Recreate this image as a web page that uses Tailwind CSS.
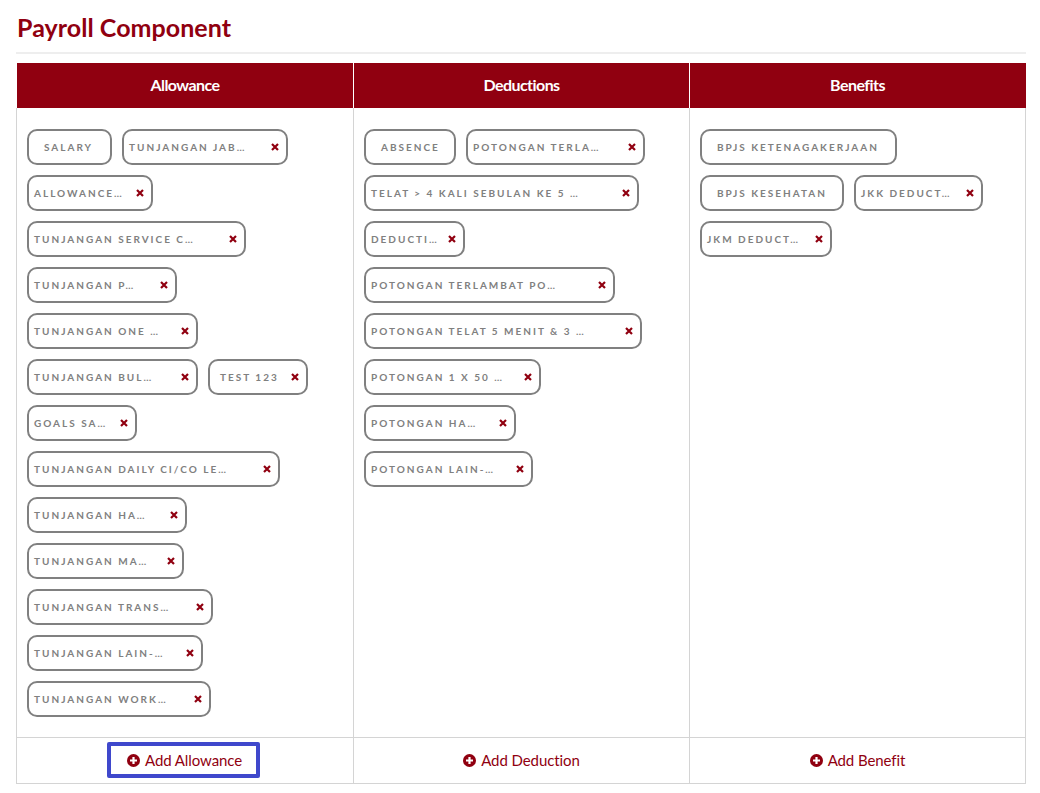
<!DOCTYPE html>
<html>
<head>
<meta charset="utf-8">
<script src="https://cdn.jsdelivr.net/npm/@tailwindcss/browser@4"></script>
</head>
<body class="bg-white font-['Lato','Liberation_Sans',sans-serif]">
<div class="w-[1040px] h-[793px] overflow-hidden pl-4 pr-[14px] pt-[10px]">
  <h1 class="text-[25px] leading-[34px] font-bold text-[#900010] pl-px tracking-[0.05px]">Payroll Component</h1>
  <div class="h-[2px] bg-[#eeeeee] mt-[8px] mb-[9px]"></div>
  <div class="grid grid-cols-[337px_336px_337px] w-[1010px]">
    <div class="h-[45px] pb-[2px] bg-[#900010] text-white font-bold text-[16px] flex items-center justify-center tracking-[-0.55px] border-l border-white">Allowance</div>
    <div class="h-[45px] pb-[2px] bg-[#900010] text-white font-bold text-[16px] flex items-center justify-center tracking-[-0.55px] border-l border-white">Deductions</div>
    <div class="h-[45px] pb-[2px] pr-[1px] bg-[#900010] text-white font-bold text-[16px] flex items-center justify-center tracking-[-0.55px] border-l border-white">Benefits</div>

    <div class="h-[629px] border-l border-[#d4d4d4] pl-[10px] pt-[21px] flex flex-col gap-[10px]">
      <div class="flex gap-[10px]">
        <div class="w-[85px] h-[36px] border-2 border-[#808080] rounded-[10px] flex items-center pl-[15px] text-[10px] font-bold tracking-[2px] text-[#808080] whitespace-nowrap">SALARY</div>
        <div class="w-[166px] h-[36px] border-2 border-[#808080] rounded-[10px] flex items-center justify-between pl-[5px] pr-[7px] text-[10px] font-bold tracking-[2px] text-[#808080] whitespace-nowrap"><span>TUNJANGAN JAB…</span><svg class="w-[8px] h-[8px]" viewBox="0 0 8 8"><path d="M1 1L7 7M7 1L1 7" stroke="#900010" stroke-width="2.2"/></svg></div>
      </div>
      <div class="flex gap-[10px]">
        <div class="w-[126px] h-[36px] border-2 border-[#808080] rounded-[10px] flex items-center justify-between pl-[5px] pr-[7px] text-[10px] font-bold tracking-[2px] text-[#808080] whitespace-nowrap"><span>ALLOWANCE…</span><svg class="w-[8px] h-[8px]" viewBox="0 0 8 8"><path d="M1 1L7 7M7 1L1 7" stroke="#900010" stroke-width="2.2"/></svg></div>
      </div>
      <div class="flex gap-[10px]">
        <div class="w-[219px] h-[36px] border-2 border-[#808080] rounded-[10px] flex items-center justify-between pl-[5px] pr-[7px] text-[10px] font-bold tracking-[2px] text-[#808080] whitespace-nowrap"><span>TUNJANGAN SERVICE C…</span><svg class="w-[8px] h-[8px]" viewBox="0 0 8 8"><path d="M1 1L7 7M7 1L1 7" stroke="#900010" stroke-width="2.2"/></svg></div>
      </div>
      <div class="flex gap-[10px]">
        <div class="w-[150px] h-[36px] border-2 border-[#808080] rounded-[10px] flex items-center justify-between pl-[5px] pr-[7px] text-[10px] font-bold tracking-[2px] text-[#808080] whitespace-nowrap"><span>TUNJANGAN P…</span><svg class="w-[8px] h-[8px]" viewBox="0 0 8 8"><path d="M1 1L7 7M7 1L1 7" stroke="#900010" stroke-width="2.2"/></svg></div>
      </div>
      <div class="flex gap-[10px]">
        <div class="w-[171px] h-[36px] border-2 border-[#808080] rounded-[10px] flex items-center justify-between pl-[5px] pr-[7px] text-[10px] font-bold tracking-[2px] text-[#808080] whitespace-nowrap"><span>TUNJANGAN ONE …</span><svg class="w-[8px] h-[8px]" viewBox="0 0 8 8"><path d="M1 1L7 7M7 1L1 7" stroke="#900010" stroke-width="2.2"/></svg></div>
      </div>
      <div class="flex gap-[10px]">
        <div class="w-[171px] h-[36px] border-2 border-[#808080] rounded-[10px] flex items-center justify-between pl-[5px] pr-[7px] text-[10px] font-bold tracking-[2px] text-[#808080] whitespace-nowrap"><span>TUNJANGAN BUL…</span><svg class="w-[8px] h-[8px]" viewBox="0 0 8 8"><path d="M1 1L7 7M7 1L1 7" stroke="#900010" stroke-width="2.2"/></svg></div>
        <div class="w-[100px] h-[36px] border-2 border-[#808080] rounded-[10px] flex items-center justify-between pl-[10px] pr-[7px] text-[10px] font-bold tracking-[2px] text-[#808080] whitespace-nowrap"><span>TEST 123</span><svg class="w-[8px] h-[8px]" viewBox="0 0 8 8"><path d="M1 1L7 7M7 1L1 7" stroke="#900010" stroke-width="2.2"/></svg></div>
      </div>
      <div class="flex gap-[10px]">
        <div class="w-[110px] h-[36px] border-2 border-[#808080] rounded-[10px] flex items-center justify-between pl-[5px] pr-[7px] text-[10px] font-bold tracking-[2px] text-[#808080] whitespace-nowrap"><span>GOALS SA…</span><svg class="w-[8px] h-[8px]" viewBox="0 0 8 8"><path d="M1 1L7 7M7 1L1 7" stroke="#900010" stroke-width="2.2"/></svg></div>
      </div>
      <div class="flex gap-[10px]">
        <div class="w-[253px] h-[36px] border-2 border-[#808080] rounded-[10px] flex items-center justify-between pl-[5px] pr-[7px] text-[10px] font-bold tracking-[2px] text-[#808080] whitespace-nowrap"><span>TUNJANGAN DAILY CI/CO LE…</span><svg class="w-[8px] h-[8px]" viewBox="0 0 8 8"><path d="M1 1L7 7M7 1L1 7" stroke="#900010" stroke-width="2.2"/></svg></div>
      </div>
      <div class="flex gap-[10px]">
        <div class="w-[160px] h-[36px] border-2 border-[#808080] rounded-[10px] flex items-center justify-between pl-[5px] pr-[7px] text-[10px] font-bold tracking-[2px] text-[#808080] whitespace-nowrap"><span>TUNJANGAN HA…</span><svg class="w-[8px] h-[8px]" viewBox="0 0 8 8"><path d="M1 1L7 7M7 1L1 7" stroke="#900010" stroke-width="2.2"/></svg></div>
      </div>
      <div class="flex gap-[10px]">
        <div class="w-[157px] h-[36px] border-2 border-[#808080] rounded-[10px] flex items-center justify-between pl-[5px] pr-[7px] text-[10px] font-bold tracking-[2px] text-[#808080] whitespace-nowrap"><span>TUNJANGAN MA…</span><svg class="w-[8px] h-[8px]" viewBox="0 0 8 8"><path d="M1 1L7 7M7 1L1 7" stroke="#900010" stroke-width="2.2"/></svg></div>
      </div>
      <div class="flex gap-[10px]">
        <div class="w-[186px] h-[36px] border-2 border-[#808080] rounded-[10px] flex items-center justify-between pl-[5px] pr-[7px] text-[10px] font-bold tracking-[2px] text-[#808080] whitespace-nowrap"><span>TUNJANGAN TRANS…</span><svg class="w-[8px] h-[8px]" viewBox="0 0 8 8"><path d="M1 1L7 7M7 1L1 7" stroke="#900010" stroke-width="2.2"/></svg></div>
      </div>
      <div class="flex gap-[10px]">
        <div class="w-[176px] h-[36px] border-2 border-[#808080] rounded-[10px] flex items-center justify-between pl-[5px] pr-[7px] text-[10px] font-bold tracking-[2px] text-[#808080] whitespace-nowrap"><span>TUNJANGAN LAIN-…</span><svg class="w-[8px] h-[8px]" viewBox="0 0 8 8"><path d="M1 1L7 7M7 1L1 7" stroke="#900010" stroke-width="2.2"/></svg></div>
      </div>
      <div class="flex gap-[10px]">
        <div class="w-[184px] h-[36px] border-2 border-[#808080] rounded-[10px] flex items-center justify-between pl-[5px] pr-[7px] text-[10px] font-bold tracking-[2px] text-[#808080] whitespace-nowrap"><span>TUNJANGAN WORK…</span><svg class="w-[8px] h-[8px]" viewBox="0 0 8 8"><path d="M1 1L7 7M7 1L1 7" stroke="#900010" stroke-width="2.2"/></svg></div>
      </div>
    </div>

    <div class="h-[629px] border-l border-[#d4d4d4] pl-[10px] pt-[21px] flex flex-col gap-[10px]">
      <div class="flex gap-[10px]">
        <div class="w-[92px] h-[36px] border-2 border-[#808080] rounded-[10px] flex items-center pl-[15px] text-[10px] font-bold tracking-[2px] text-[#808080] whitespace-nowrap">ABSENCE</div>
        <div class="w-[179px] h-[36px] border-2 border-[#808080] rounded-[10px] flex items-center justify-between pl-[5px] pr-[7px] text-[10px] font-bold tracking-[2px] text-[#808080] whitespace-nowrap"><span>POTONGAN TERLA…</span><svg class="w-[8px] h-[8px]" viewBox="0 0 8 8"><path d="M1 1L7 7M7 1L1 7" stroke="#900010" stroke-width="2.2"/></svg></div>
      </div>
      <div class="flex gap-[10px]">
        <div class="w-[275px] h-[36px] border-2 border-[#808080] rounded-[10px] flex items-center justify-between pl-[5px] pr-[7px] text-[10px] font-bold tracking-[2px] text-[#808080] whitespace-nowrap"><span>TELAT &gt; 4 KALI SEBULAN KE 5 …</span><svg class="w-[8px] h-[8px]" viewBox="0 0 8 8"><path d="M1 1L7 7M7 1L1 7" stroke="#900010" stroke-width="2.2"/></svg></div>
      </div>
      <div class="flex gap-[10px]">
        <div class="w-[101px] h-[36px] border-2 border-[#808080] rounded-[10px] flex items-center justify-between pl-[5px] pr-[7px] text-[10px] font-bold tracking-[2px] text-[#808080] whitespace-nowrap"><span>DEDUCTI…</span><svg class="w-[8px] h-[8px]" viewBox="0 0 8 8"><path d="M1 1L7 7M7 1L1 7" stroke="#900010" stroke-width="2.2"/></svg></div>
      </div>
      <div class="flex gap-[10px]">
        <div class="w-[251px] h-[36px] border-2 border-[#808080] rounded-[10px] flex items-center justify-between pl-[5px] pr-[7px] text-[10px] font-bold tracking-[2px] text-[#808080] whitespace-nowrap"><span>POTONGAN TERLAMBAT PO…</span><svg class="w-[8px] h-[8px]" viewBox="0 0 8 8"><path d="M1 1L7 7M7 1L1 7" stroke="#900010" stroke-width="2.2"/></svg></div>
      </div>
      <div class="flex gap-[10px]">
        <div class="w-[278px] h-[36px] border-2 border-[#808080] rounded-[10px] flex items-center justify-between pl-[5px] pr-[7px] text-[10px] font-bold tracking-[2px] text-[#808080] whitespace-nowrap"><span>POTONGAN TELAT 5 MENIT &amp; 3 …</span><svg class="w-[8px] h-[8px]" viewBox="0 0 8 8"><path d="M1 1L7 7M7 1L1 7" stroke="#900010" stroke-width="2.2"/></svg></div>
      </div>
      <div class="flex gap-[10px]">
        <div class="w-[177px] h-[36px] border-2 border-[#808080] rounded-[10px] flex items-center justify-between pl-[5px] pr-[7px] text-[10px] font-bold tracking-[2px] text-[#808080] whitespace-nowrap"><span>POTONGAN 1 X 50 …</span><svg class="w-[8px] h-[8px]" viewBox="0 0 8 8"><path d="M1 1L7 7M7 1L1 7" stroke="#900010" stroke-width="2.2"/></svg></div>
      </div>
      <div class="flex gap-[10px]">
        <div class="w-[152px] h-[36px] border-2 border-[#808080] rounded-[10px] flex items-center justify-between pl-[5px] pr-[7px] text-[10px] font-bold tracking-[2px] text-[#808080] whitespace-nowrap"><span>POTONGAN HA…</span><svg class="w-[8px] h-[8px]" viewBox="0 0 8 8"><path d="M1 1L7 7M7 1L1 7" stroke="#900010" stroke-width="2.2"/></svg></div>
      </div>
      <div class="flex gap-[10px]">
        <div class="w-[169px] h-[36px] border-2 border-[#808080] rounded-[10px] flex items-center justify-between pl-[5px] pr-[7px] text-[10px] font-bold tracking-[2px] text-[#808080] whitespace-nowrap"><span>POTONGAN LAIN-…</span><svg class="w-[8px] h-[8px]" viewBox="0 0 8 8"><path d="M1 1L7 7M7 1L1 7" stroke="#900010" stroke-width="2.2"/></svg></div>
      </div>
    </div>

    <div class="h-[629px] border-l border-r border-[#d4d4d4] pl-[10px] pt-[21px] flex flex-col gap-[10px]">
      <div class="flex gap-[10px]">
        <div class="w-[197px] h-[36px] border-2 border-[#808080] rounded-[10px] flex items-center pl-[15px] text-[10px] font-bold tracking-[2px] text-[#808080] whitespace-nowrap">BPJS KETENAGAKERJAAN</div>
      </div>
      <div class="flex gap-[10px]">
        <div class="w-[144px] h-[36px] border-2 border-[#808080] rounded-[10px] flex items-center pl-[15px] text-[10px] font-bold tracking-[2px] text-[#808080] whitespace-nowrap">BPJS KESEHATAN</div>
        <div class="w-[129px] h-[36px] border-2 border-[#808080] rounded-[10px] flex items-center justify-between pl-[5px] pr-[7px] text-[10px] font-bold tracking-[2px] text-[#808080] whitespace-nowrap"><span>JKK DEDUCT…</span><svg class="w-[8px] h-[8px]" viewBox="0 0 8 8"><path d="M1 1L7 7M7 1L1 7" stroke="#900010" stroke-width="2.2"/></svg></div>
      </div>
      <div class="flex gap-[10px]">
        <div class="w-[132px] h-[36px] border-2 border-[#808080] rounded-[10px] flex items-center justify-between pl-[5px] pr-[7px] text-[10px] font-bold tracking-[2px] text-[#808080] whitespace-nowrap"><span>JKM DEDUCT…</span><svg class="w-[8px] h-[8px]" viewBox="0 0 8 8"><path d="M1 1L7 7M7 1L1 7" stroke="#900010" stroke-width="2.2"/></svg></div>
      </div>
    </div>

    <div class="h-[47px] border-l border-t border-b border-[#d4d4d4] flex items-center justify-center">
      <div class="w-[153px] h-[36px] mr-[3px] mb-[2px] pt-[2px] border-[4px] border-[#3f48cc] rounded-[2px] flex items-center pl-[16px] gap-[5px] text-[15px] tracking-[-0.08px] text-[#900010]">
        <svg class="w-[13px] h-[13px]" viewBox="0 0 13 13"><circle cx="6.5" cy="6.5" r="6.5" fill="#900010"/><path d="M6.5 3V10M3 6.5H10" stroke="#fff" stroke-width="2.2"/></svg>
        <span>Add Allowance</span>
      </div>
    </div>
    <div class="h-[47px] border-l border-t border-b border-[#d4d4d4] flex items-center justify-center gap-[5px] text-[15px] tracking-[-0.08px] text-[#900010]">
      <svg class="w-[13px] h-[13px]" viewBox="0 0 13 13"><circle cx="6.5" cy="6.5" r="6.5" fill="#900010"/><path d="M6.5 3V10M3 6.5H10" stroke="#fff" stroke-width="2.2"/></svg>
      <span>Add Deduction</span>
    </div>
    <div class="h-[47px] border-l border-r border-t border-b border-[#d4d4d4] flex items-center justify-center gap-[5px] text-[15px] tracking-[-0.08px] text-[#900010]">
      <svg class="w-[13px] h-[13px]" viewBox="0 0 13 13"><circle cx="6.5" cy="6.5" r="6.5" fill="#900010"/><path d="M6.5 3V10M3 6.5H10" stroke="#fff" stroke-width="2.2"/></svg>
      <span>Add Benefit</span>
    </div>
  </div>
</div>
</body>
</html>
